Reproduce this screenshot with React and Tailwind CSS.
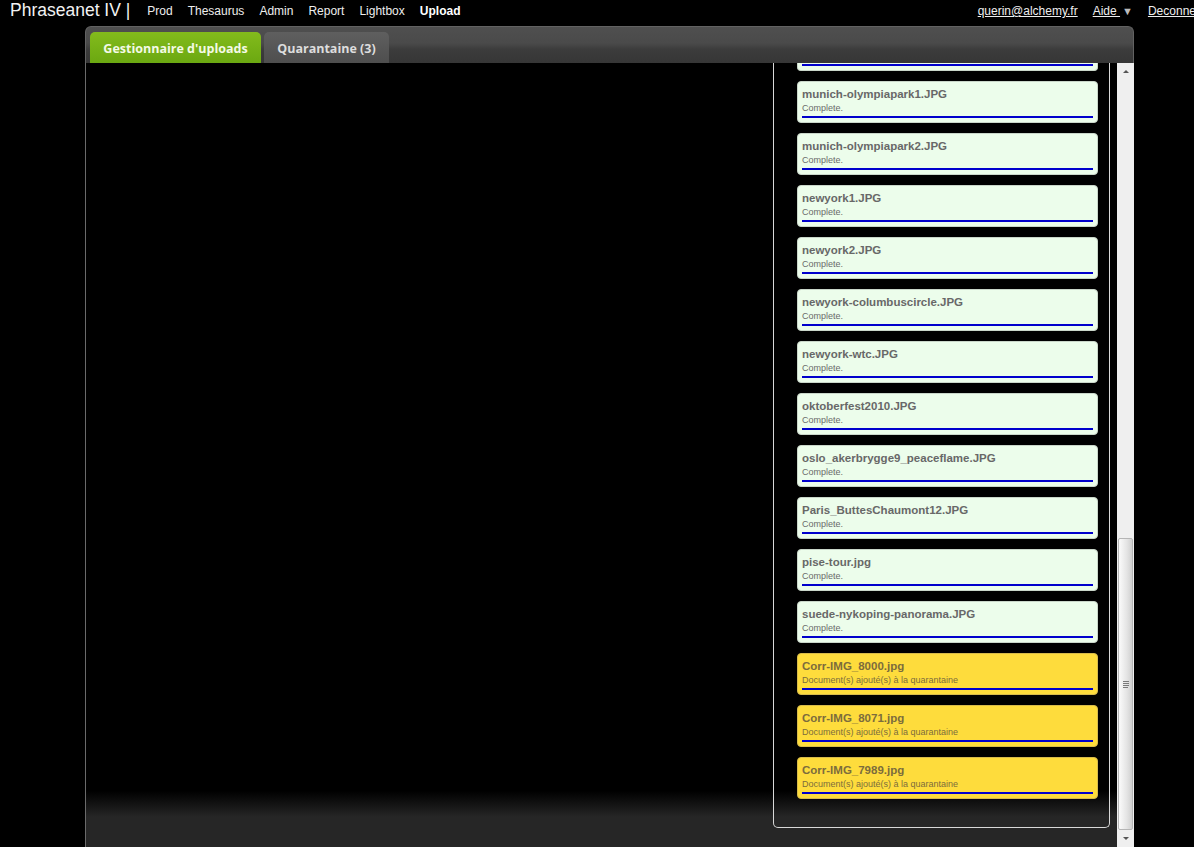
import React from "react";

const items = [
  { name: "munich-olympiapark1.JPG", desc: "Complete." },
  { name: "munich-olympiapark2.JPG", desc: "Complete." },
  { name: "newyork1.JPG", desc: "Complete." },
  { name: "newyork2.JPG", desc: "Complete." },
  { name: "newyork-columbuscircle.JPG", desc: "Complete." },
  { name: "newyork-wtc.JPG", desc: "Complete." },
  { name: "oktoberfest2010.JPG", desc: "Complete." },
  { name: "oslo_akerbrygge9_peaceflame.JPG", desc: "Complete." },
  { name: "Paris_ButtesChaumont12.JPG", desc: "Complete." },
  { name: "pise-tour.jpg", desc: "Complete." },
  { name: "suede-nykoping-panorama.JPG", desc: "Complete." },
  { name: "Corr-IMG_8000.jpg", desc: "Document(s) ajouté(s) à la quarantaine", yellow: true },
  { name: "Corr-IMG_8071.jpg", desc: "Document(s) ajouté(s) à la quarantaine", yellow: true },
  { name: "Corr-IMG_7989.jpg", desc: "Document(s) ajouté(s) à la quarantaine", yellow: true },
];

function Item({ name, desc, yellow }) {
  return (
    <div
      className={`h-[42px] shrink-0 rounded-[4px] border px-[4px] pt-[5px] ${
        yellow ? "bg-[#fedc3c] border-[#d8bb4a]" : "bg-[#ecfdeb] border-[#c9d6c9]"
      }`}
    >
      <div
        className={`h-[15px] text-[11.5px] leading-[15px] font-bold whitespace-nowrap ${
          yellow ? "text-[#7c6c3c]" : "text-[#686868]"
        }`}
      >
        {name}
      </div>
      <div
        className={`h-[12px] text-[9px] leading-[12px] whitespace-nowrap ${
          yellow ? "text-[#7c6c3c]" : "text-[#6a6a6a]"
        }`}
      >
        {desc}
      </div>
      <div className="mt-[2px] h-[2px] bg-[#0000cc]" />
    </div>
  );
}

export default function App() {
  return (
    <div
      className="h-[847px] w-[1194px] overflow-hidden bg-black"
      style={{ fontFamily: '"Liberation Sans", Arial, sans-serif' }}
    >
      {/* Top bar */}
      <div className="flex h-[26px] items-start overflow-hidden text-white">
        <div className="ml-[10px] h-[20px] text-[17.5px] leading-[20px] text-[#f2f2f2] whitespace-nowrap">
          Phraseanet IV |
        </div>
        <div className="ml-[17px] mt-[4px] flex gap-[15px] text-[12px] leading-[14px] text-[#eeeeee]">
          <span>Prod</span>
          <span>Thesaurus</span>
          <span>Admin</span>
          <span>Report</span>
          <span>Lightbox</span>
          <span className="font-bold text-white">Upload</span>
        </div>
        <div className="ml-auto mr-[-24px] mt-[4px] flex shrink-0 items-center text-[12px] leading-[14px] text-[#eeeeee]">
          <span className="underline">querin@alchemy.fr</span>
          <span className="ml-[15px] underline whitespace-pre">Aide </span>
          <span className="ml-[2px] text-[11px] text-[#bbbbbb]">▼</span>
          <span className="ml-[15px] underline">Deconnexion</span>
        </div>
      </div>

      {/* Main panel */}
      <div className="ml-[85px] flex h-[821px] w-[1049px] flex-col">
        {/* Header with tabs */}
        <div className="flex h-[37px] shrink-0 items-end gap-[3px] rounded-t-[6px] border-x border-t border-[#626262] bg-[linear-gradient(to_bottom,#4f4f4f_0%,#4a4a4a_45%,#3c3c3c_62%,#363636_100%)] pl-[4px]">
          <div
            className="flex h-[31px] w-[171px] items-center justify-center rounded-t-[5px] bg-[linear-gradient(to_bottom,#83bb1c,#6ba811)] pt-[3px] text-[12.5px] font-bold text-[#f4fae6]"
            style={{ fontFamily: '"Open Sans", sans-serif' }}
          >
            Gestionnaire d'uploads
          </div>
          <div
            className="flex h-[31px] w-[125px] items-center justify-center rounded-t-[5px] bg-[linear-gradient(to_bottom,#5f5f5f,#4e4e4e)] pt-[3px] text-[12.5px] font-bold text-[#dddddd]"
            style={{ fontFamily: '"Open Sans", sans-serif' }}
          >
            Quarantaine (3)
          </div>
        </div>

        {/* Content */}
        <div className="flex h-[784px] border-l border-[#6a6a6a] bg-[linear-gradient(to_bottom,#000_728px,#262626_754px)]">
          <div className="flex-1" />
          {/* Right upload list */}
          <div className="flex h-[765px] w-[337px] flex-col gap-[10px] overflow-hidden rounded-b-[5px] border-x border-b border-[#d8d8d8] pl-[23px] pr-[11px]">
            {/* bottom of the previous (scrolled-off) item */}
            <div className="h-[8px] shrink-0 rounded-b-[4px] border-x border-b border-[#c9d6c9] bg-[#ecfdeb] px-[4px]">
              <div className="mt-[1px] h-[2px] bg-[#0000cc]" />
            </div>
            {items.map((it, i) => (
              <Item key={i} {...it} />
            ))}
          </div>
          <div className="w-[7px]" />
          {/* Scrollbar */}
          <div className="flex h-full w-[17px] flex-col bg-[#efefef]">
            <div className="flex h-[17px] shrink-0 items-center justify-center">
              <div className="h-0 w-0 border-x-[3px] border-b-[3px] border-x-transparent border-b-[#555]" />
            </div>
            <div className="flex flex-1 flex-col justify-end">
              <div className="mx-[1px] flex h-[292px] items-center justify-center rounded-[2px] border border-[#b5b5b5] bg-[linear-gradient(to_right,#fbfbfb,#e4e4e4_60%,#d0d0d0)]">
                <div className="flex flex-col gap-[1px]">
                  <div className="h-[1px] w-[6px] bg-[#7a7a7a]" />
                  <div className="h-[1px] w-[6px] bg-[#7a7a7a]" />
                  <div className="h-[1px] w-[6px] bg-[#7a7a7a]" />
                  <div className="h-[1px] w-[5px] bg-[#7a7a7a]" />
                </div>
              </div>
            </div>
            <div className="flex h-[17px] shrink-0 items-center justify-center">
              <div className="h-0 w-0 border-x-[3px] border-t-[3px] border-x-transparent border-t-[#555]" />
            </div>
          </div>
        </div>
      </div>
    </div>
  );
}
